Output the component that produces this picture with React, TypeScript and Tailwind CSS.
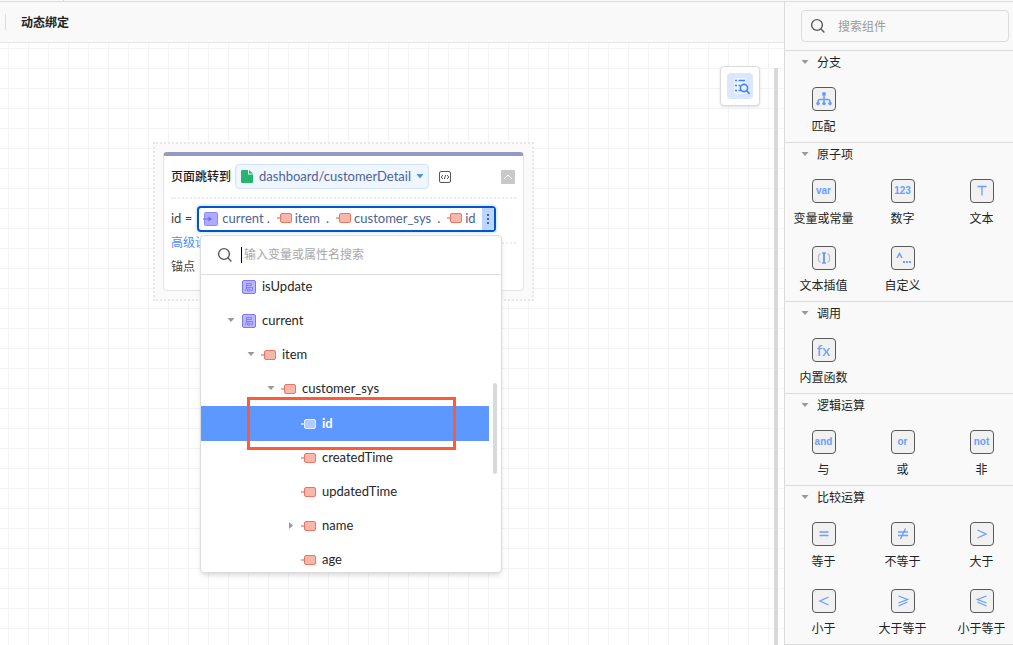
import { useState, type ReactNode } from 'react';

interface TreeRow { label: string; icon: 'local' | 'field'; pad: string; arrow?: 'down' | 'right'; active?: boolean; }
interface PaletteItem { label: string; icon: ReactNode; }
interface PaletteGroup { title: string; items: PaletteItem[]; }

const TREE: TreeRow[] = [
  { label: 'isUpdate', icon: 'local', pad: 'pl-6' },
  { label: 'current', icon: 'local', pad: 'pl-6', arrow: 'down' },
  { label: 'item', icon: 'field', pad: 'pl-11', arrow: 'down' },
  { label: 'customer_sys', icon: 'field', pad: 'pl-16', arrow: 'down' },
  { label: 'id', icon: 'field', pad: 'pl-21', active: true },
  { label: 'createdTime', icon: 'field', pad: 'pl-21' },
  { label: 'updatedTime', icon: 'field', pad: 'pl-21' },
  { label: 'name', icon: 'field', pad: 'pl-21', arrow: 'right' },
  { label: 'age', icon: 'field', pad: 'pl-21' },
];

const SearchIcon = () => (
  <svg width="16" height="16" viewBox="0 0 16 16" fill="none" stroke="#595959" strokeWidth="1.4" className="shrink-0">
    <circle cx="7" cy="7" r="5.4" />
    <path d="M11 11l3.4 3.4" />
  </svg>
);

const LocalIcon = () => (
  <svg width="14" height="14" viewBox="0 0 14 14" fill="none" stroke="#7d75ff" className="shrink-0">
    <rect x=".5" y=".5" width="13" height="13" rx="1.5" fill="#bbb8ff" />
    <path d="M4.500 3.500h5v2h-5zM4.500 5.500V8L3 11M4.500 7.500h6v3H9M5.500 9h2.500v2h-2.500z" strokeWidth=".9" />
  </svg>
);

const FieldIcon = ({ active = false }: { active?: boolean }) => (
  <svg width="16" height="10" viewBox="0 0 16 10" fill="none" className="shrink-0">
    <path d="M0 5h4" stroke={active ? '#c3d8ff' : '#f6a596'} strokeWidth="2" />
    <rect x="3.5" y=".5" width="11" height="9" rx="1.5" fill={active ? '#b0ccff' : '#f6b8ad'} stroke={active ? '#e6efff' : '#ec7460'} />
  </svg>
);

const EnterIcon = () => (
  <svg width="15" height="14" viewBox="0 0 15 14" fill="none" className="shrink-0">
    <rect x="1.5" y=".5" width="13" height="13" rx="1" fill="#aeabff" stroke="#8f89ff" />
    <path d="M0 7h7" stroke="#6f68f5" />
    <path d="M5.500 4.500L9 7L5.500 9.500z" fill="#6f68f5" />
  </svg>
);

const Arrow = ({ dir }: { dir?: 'down' | 'right' }) => (
  <svg width="12" height="8" viewBox="0 0 12 8" fill="#999" className="shrink-0">
    {dir === 'down' && <path d="M2.500 1h7L6 5z" />}
    {dir === 'right' && <path d="M4 0v7l4-3.500z" />}
  </svg>
);

const glyph = (path: ReactNode) => (
  <svg width="18" height="18" viewBox="0 0 18 18" fill="none" stroke="#6b9dff" strokeWidth="1.3">{path}</svg>
);
const word = (text: string) => <span className="font-['Liberation_Sans',sans-serif] text-[10px] font-bold leading-none">{text}</span>;

const GROUPS: PaletteGroup[] = [
  {
    title: '分支',
    items: [{
      label: '匹配',
      icon: glyph(<>
        <path d="M9 4v10M3 14v-2.500Q3 9.500 5 9.500h8q2 0 2 2V14" strokeWidth="1.500" />
        <g fill="#6b9dff" stroke="none"><circle cx="9" cy="4" r="2" /><circle cx="3" cy="13.500" r="1.800" /><circle cx="9" cy="13.500" r="1.800" /><circle cx="15" cy="13.500" r="1.800" /></g>
      </>),
    }],
  },
  {
    title: '原子项',
    items: [
      { label: '变量或常量', icon: word('var') },
      { label: '数字', icon: word('123') },
      { label: '文本', icon: glyph(<path d="M4.500 4.500h9M9 4.500v9" />) },
      {
        label: '文本插值',
        icon: glyph(<>
          <path d="M7 4h4M7 14h4" strokeWidth="1.500" /><path d="M9 4v10" strokeWidth="2" />
          <path d="M5.500 5Q3.500 5 3.500 7.500v3Q3.500 13 5.500 13M12.500 5Q14.500 5 14.500 7.500v3Q14.500 13 12.500 13" stroke="#b9bdc6" />
        </>),
      },
      {
        label: '自定义',
        icon: glyph(<><path d="M3 9L5.500 4.500L8 9" strokeWidth="1.500" /><path d="M9 13h2M12 13h2M15 13h2" strokeWidth="2" /></>),
      },
    ],
  },
  { title: '调用', items: [{ label: '内置函数', icon: <span className="text-base leading-none">fx</span> }] },
  { title: '逻辑运算', items: [{ label: '与', icon: word('and') }, { label: '或', icon: word('or') }, { label: '非', icon: word('not') }] },
  {
    title: '比较运算',
    items: [
      { label: '等于', icon: glyph(<path d="M4.500 7h9M4.500 10.500h9" />) },
      { label: '不等于', icon: glyph(<path d="M4 7h10M4 10.500h10M11.500 3.500L6.500 14" />) },
      { label: '大于', icon: glyph(<path d="M4.500 5L13 9L4.500 13" />) },
      { label: '小于', icon: glyph(<path d="M13.500 5L5 9L13.500 13" />) },
      { label: '大于等于', icon: glyph(<path d="M4.500 4L13.500 7.500L4.500 11M13.500 10L4.500 14" />) },
      { label: '小于等于', icon: glyph(<path d="M13.500 4L4.500 7.500L13.500 11M4.500 10L13.500 14" />) },
    ],
  },
];

const VariableMenu = () => {
  const [keyword, setKeyword] = useState('');
  return (
    <div className="absolute left-[200px] top-[192px] w-[302px] rounded-sm border border-[#dcdcdc] bg-white shadow-md">
      <label className="flex h-[39px] items-center border-b border-[#dedede] pl-4">
        <SearchIcon />
        <span className="ml-2 h-4 w-px bg-black" />
        <input
          type="text"
          aria-label="搜索变量"
          placeholder="输入变量或属性名搜索"
          value={keyword}
          onChange={(e) => setKeyword(e.target.value)}
          className="min-w-0 flex-1 pl-0.5 text-xs placeholder-[#a8a8a8] outline-none"
        />
      </label>
      <div className="flex h-[297px] overflow-hidden">
        <ul className="-mt-[5px] flex-1">
          {TREE.map((row) => (
            <li key={row.label}>
              <button className={`flex w-full items-center gap-1 text-left text-[13px] ${row.pad} ${row.active ? 'h-[35px] bg-[#5c98ff] font-bold text-white' : 'h-[34px] text-[#262626]'}`}>
                <Arrow dir={row.arrow} />
                <span className="flex w-4 justify-center">
                  {row.icon === 'local' ? <LocalIcon /> : <FieldIcon active={row.active} />}
                </span>
                <span className="ml-px">{row.label}</span>
              </button>
            </li>
          ))}
        </ul>
        <div className="w-3 pl-1 pt-[108px]">
          <div className="h-[91px] w-1 rounded-full bg-[#d9d9d9]" />
        </div>
      </div>
    </div>
  );
};

const PathField = ({ name }: { name: string }) => (
  <span className="ml-[7px] flex items-center gap-0.5"><FieldIcon />{name}</span>
);
const Dot = () => <span className="ml-[6px]">.</span>;

const JumpNode = () => (
  <div className="absolute left-[153px] top-[99px] w-[381px] border-2 border-dotted border-[#e8e8e8] bg-[#fafafa] p-2">
    <div className="h-[139px] rounded border border-t-4 border-[#e4e4e4] border-t-[#9599c4] bg-white px-[7px] text-xs text-[#444]">
      <div className="flex h-[41px] items-center">
        <span className="font-medium text-[#222]">页面跳转到</span>
        <button className="ml-1 flex h-[25px] items-center rounded border border-[#cfe2ff] bg-[#f0f6ff] pl-[5px] pr-1 text-[13px] text-[#4d6396]">
          <svg width="12" height="13" viewBox="0 0 12 13" fill="#27b46e"><path d="M0 1q0-1 1-1h6v4.500h5V12q0 1-1 1H1q-1 0-1-1z" /><path d="M8 0l4 3.500H8z" /></svg>
          <span className="ml-[6px] mr-[5px]">dashboard/customerDetail</span>
          <svg width="8" height="5" viewBox="0 0 8 5" fill="#5293d8"><path d="M.5 0h7L4 4.500z" /></svg>
        </button>
        <button aria-label="源码" className="ml-[10px]">
          <svg width="12" height="12" viewBox="0 0 12 12" fill="none" stroke="#444" strokeWidth=".9"><rect x=".5" y=".5" width="11" height="11" rx="1.5" /><path d="M4 4L2.200 6L4 8M8 4l1.800 2L8 8M6.700 4L5.300 8" /></svg>
        </button>
        <button aria-label="收起" className="ml-auto mr-px flex size-[14px] items-center justify-center rounded-[1px] bg-[#c8c8c8]">
          <svg width="10" height="6" viewBox="0 0 10 6" fill="none" stroke="#fff"><path d="M1 5l4-4l4 4" /></svg>
        </button>
      </div>
      <div className="flex h-[41px] items-center border-t-2 border-dotted border-[#ececec]">
        <span className="text-[13px]">id =</span>
        <div className="ml-[5px] flex h-[26px] items-center rounded border-2 border-[#0055cc] bg-white pl-1 text-[13px] text-[#4d6396] shadow-[0_0_0_2px_#e6f1ff]">
          <EnterIcon />
          <span className="ml-1">current</span>
          <span className="ml-[3px]">.</span>
          <PathField name="item" />
          <Dot />
          <PathField name="customer_sys" />
          <Dot />
          <PathField name="id" />
          <button aria-label="更多" className="ml-[6px] flex h-[22px] w-3 items-center justify-center bg-[#bcd7ff]">
            <svg width="2" height="10" viewBox="0 0 2 10" fill="#4d6396"><path d="M0 0h2v2H0zM0 4h2v2H0zM0 8h2v2H0z" /></svg>
          </button>
        </div>
      </div>
      <div className="flex h-[10px] items-center gap-2">
        <a href="#advanced" className="shrink-0 text-[#4c8dff]">高级设置</a>
        <span className="flex-1 border-t-2 border-dotted border-[#ececec]" />
      </div>
      <label className="flex h-[37px] items-center gap-2">
        锚点
        <input type="text" className="h-[22px] w-[299px] rounded border border-[#cfe2ff]" />
      </label>
    </div>
  </div>
);

const Palette = () => (
  <aside className="w-[229px] shrink-0 overflow-hidden border-l border-[#dcdcdc] bg-[#f9f9f9]">
    <div className="h-12 pl-4 pr-1 pt-2">
      <label className="flex h-8 items-center rounded border border-[#dcdcdc] pl-2">
        <SearchIcon />
        <input type="text" aria-label="搜索组件" placeholder="搜索组件" className="ml-3 min-w-0 flex-1 pt-0.5 text-xs placeholder-[#999] outline-none" />
      </label>
    </div>
    {GROUPS.map((group) => (
      <section key={group.title} className="border-t border-[#dcdcdc] last:border-b">
        <button className="flex h-6 w-full items-center gap-[6px] pl-[14px] text-xs text-[#222]">
          <Arrow dir="down" />
          {group.title}
        </button>
        <div className="-ml-px grid grid-cols-[repeat(3,79px)]">
          {group.items.map((item) => (
            <button key={item.label} className="flex h-[67px] flex-col items-center pt-3 text-xs text-[#222]">
              <span className="flex size-6 items-center justify-center rounded border border-[#595959] bg-[#f1f1f1] text-[#6b9dff]">{item.icon}</span>
              <span className="mt-2">{item.label}</span>
            </button>
          ))}
        </div>
      </section>
    ))}
  </aside>
);

const App = () => (
  <div className="flex h-screen flex-col overflow-hidden bg-[#f9f9f9] font-['Lato','Noto_Sans_CJK_SC',sans-serif]">
    <div className="flex h-[2px] shrink-0 border-b border-[#dcdcdc]">
      <span className="w-16 border-r border-[#dcdcdc]" />
    </div>
    <div className="flex min-h-0 flex-1">
      <main className="flex min-w-0 flex-1 flex-col">
        <header className="flex h-[41px] shrink-0 items-center border-b border-[#e8e8e8] pl-[5px]">
          <span className="h-4 w-px bg-[#dcdcdc]" />
          <h1 className="ml-[15px] pt-0.5 text-xs font-bold text-[#222]">动态绑定</h1>
        </header>
        <div className="relative flex-1 overflow-hidden bg-white bg-[linear-gradient(to_right,#f4f4f4_1px,transparent_1px),linear-gradient(to_bottom,#f4f4f4_1px,transparent_1px)] bg-size-[20px_20px] bg-position-[8px_5px]">
          <JumpNode />
          <VariableMenu />
          <div className="pointer-events-none absolute left-[247px] top-[354px] h-[53px] w-[209px] border-3 border-[#ff5a36]" />
          <button aria-label="查找" className="absolute right-6 top-[23px] flex size-10 items-center justify-center rounded border border-[#dcdcdc] bg-white shadow-sm">
            <span className="flex size-[26px] items-center justify-center rounded bg-[#dbe7ff]">
              <svg width="20" height="20" viewBox="0 0 20 20" fill="none" stroke="#4083ff" strokeWidth="1.6">
                <rect x="4" y="2" width="12" height="16" rx="1" fill="#edf3ff" stroke="none" />
                <path d="M8.500 4.500h6.500M8.500 9.500h2M8.500 14.500h2.500M5 4.500h2M5 9.500h2M5 14.500h2" />
                <circle cx="14" cy="12" r="3.600" /><path d="M16.500 14.500l3 3.500" />
              </svg>
            </span>
          </button>
          <div className="absolute bottom-0 right-[6px] top-[25px] w-1 bg-[#d9d9d9]" />
        </div>
      </main>
      <Palette />
    </div>
  </div>
);

export default App;
